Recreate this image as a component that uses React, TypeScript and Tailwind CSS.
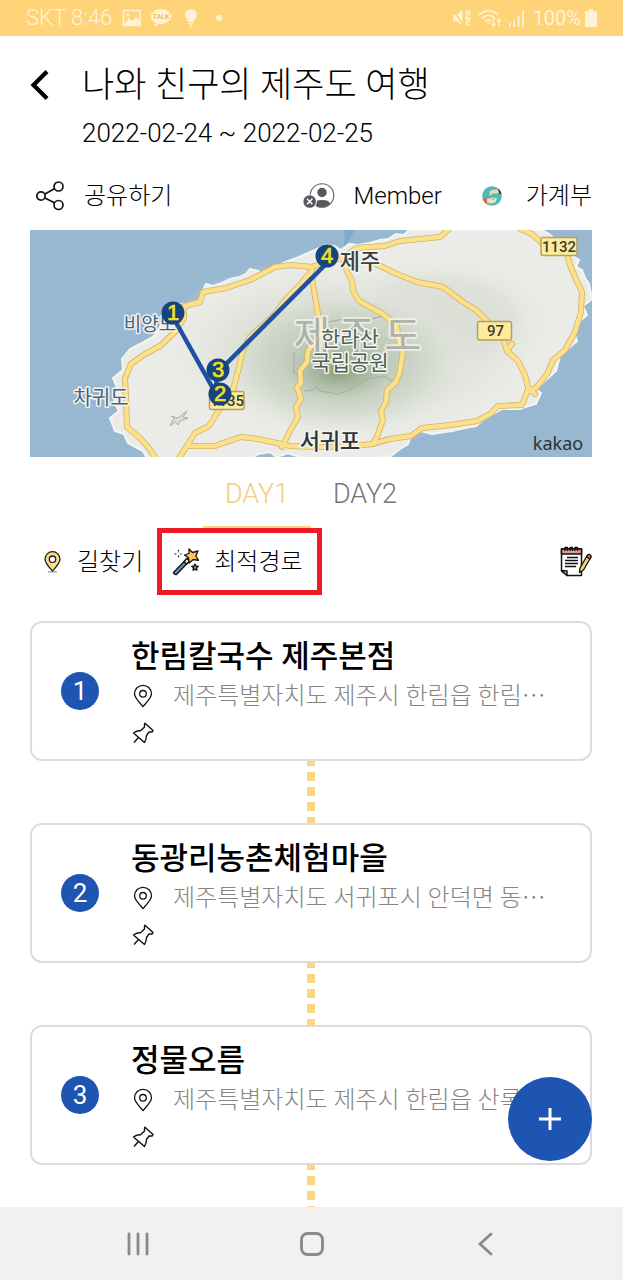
import React from "react";

const ROADS = [
  "M172 313L185 306L200 302L203 292L226 288L250 280L275 267L290 265L312 267L325 262L342 258L357 248L368 247L385 246L400 241L440 237L450 228",
  "M516 227L532 234L543 244L566 250L570 265L575 277L582 292L581 312L575 332L565 350L553 360L547 374L536 388L527 392L522 405L498 406L490 414L477 421L450 425L422 428L411 436L390 439L372 444L355 446L320 447L290 446L272 442L258 439L241 437L226 442L215 446L187 446",
  "M184 307L184 318L176 331L160 346L145 354L131 364L125 378L126 400L127 427L140 438L148 447L157 460",
  "M312 270L300 285L287 298L274 315L250 337L243 350L237 375L233 390L226 400L217 413L209 426L195 433L186 447L178 460",
  "M311 272L314 290L318 314L322 332L308 351L307 362L300 371L301 383L297 387L301 399L296 407L298 417L290 431L282 447",
  "M344 262L347 271L352 281L353 291L359 301L370 307L383 314L397 326L399 342L403 351L400 371L396 382L387 390L386 402L381 411L383 420L377 437L373 443",
  "M376 264L397 274L417 282L443 287L463 302L476 310L487 321L503 338L507 351L518 361L525 375L528 388L535 394",
  "M507 350L512 344",
];

const LAND =
  "M409 230L404 235L396 234L388 239L380 240L370 243L358 245L349 244L341 250L334 246L325 245L315 250L308 253L299 257L291 260L281 264L268 272L262 275L258 271L250 269L246 274L240 277L230 279L222 283L213 286L206 284L203 290L201 300L186 304L174 305L164 312L160 327L153 337L142 343L130 349L122 359L123 370L113 378L118 390L114 402L119 411L110 418L115 431L124 434L128 443L143 451L148 460L250 460L258 454L270 452L277 457L288 453L302 458L380 458L391 456L400 449L408 444L411 435L421 431L432 434L452 431L465 428L476 426L482 421L493 414L502 409L520 409L528 406L536 404L541 393L536 389L547 379L556 371L560 356L569 348L577 341L575 335L580 321L587 315L583 306L592 299L589 284L585 278L582 270L576 267L579 260L571 255L560 243L549 234L542 230Z";

type MapTextProps = {
  x: number;
  y: number;
  size: number;
  fill: string;
  weight?: number;
  halo?: number;
  children: React.ReactNode;
};

function MapText({ x, y, size, fill, weight = 500, halo = 3, children }: MapTextProps) {
  return (
    <text
      x={x}
      y={y}
      fontSize={size}
      fontWeight={weight}
      fill={fill}
      textAnchor="middle"
      stroke="#f4f5f1"
      strokeWidth={halo}
      strokeLinejoin="round"
      paintOrder="stroke"
    >
      {children}
    </text>
  );
}

const MARKERS = [
  { n: 1, x: 173, y: 313 },
  { n: 3, x: 218, y: 370 },
  { n: 2, x: 220, y: 394 },
  { n: 4, x: 327, y: 256 },
];

function RouteMap() {
  return (
    <svg viewBox="30 230 562 227" className="block h-auto w-full" role="img" aria-label="제주도">
      <defs>
        <radialGradient id="forest">
          <stop offset="0" stopColor="#a9bba3" />
          <stop offset="0.35" stopColor="#bfcab9" />
          <stop offset="0.7" stopColor="#d5dbcf" />
          <stop offset="1" stopColor="#e6e9e2" stopOpacity="0" />
        </radialGradient>
        <radialGradient id="summit">
          <stop offset="0" stopColor="#88a17f" />
          <stop offset="1" stopColor="#a7b9a0" stopOpacity="0" />
        </radialGradient>
        <radialGradient id="hills">
          <stop offset="0" stopColor="#d9ddd4" />
          <stop offset="0.6" stopColor="#dfe2da" />
          <stop offset="1" stopColor="#e9ebe5" stopOpacity="0" />
        </radialGradient>
      </defs>
      <rect x="30" y="230" width="562" height="227" fill="#98b8d1" />
      <path d="M345 230L355 230L348 242L344 249Z" fill="#7fa9cf" />
      <path d={LAND} fill="#ebece7" stroke="#f5f6f3" strokeWidth="2" />
      <ellipse cx="350" cy="350" rx="200" ry="95" fill="url(#hills)" />
      <ellipse cx="440" cy="320" rx="120" ry="65" fill="url(#hills)" />
      <ellipse cx="342" cy="360" rx="130" ry="76" fill="url(#forest)" />
      <ellipse cx="338" cy="372" rx="52" ry="28" fill="url(#summit)" />
      <path
        d="M294 352V373L303 376M304 391L314 390L316 386L320 391L338 394L352 389L366 379L384 376L396 384M328 322L350 318L370 319L385 316L400 323"
        fill="none"
        stroke="#a3aca3"
        strokeWidth="1"
      />
      <g fill="none" strokeLinejoin="round" strokeLinecap="round">
        {ROADS.map((d) => (
          <path key={d} d={d} stroke="#d2b468" strokeWidth="6" />
        ))}
        {ROADS.map((d) => (
          <path key={d} d={d} stroke="#fce08a" strokeWidth="4.400" />
        ))}
      </g>
      <path
        d="M170 426L174 418L171 416L178 418L187 411L183 417L188 418L180 421L178 425L175 422Z"
        fill="#dcdedb"
        stroke="#a9adab"
        strokeWidth="1"
      />
      <g fontFamily="'Noto Sans CJK KR', sans-serif" opacity="0.75">
        <MapText x={312} y={350} size={40} fill="#a3a7a3" halo={4} weight={400}>제</MapText>
        <MapText x={357} y={350} size={40} fill="#a3a7a3" halo={4} weight={400}>주</MapText>
        <MapText x={403} y={350} size={40} fill="#a3a7a3" halo={4} weight={400}>도</MapText>
      </g>
      <g fontFamily="'Noto Sans CJK KR', sans-serif">
        <MapText x={350} y={346} size={21} fill="#4d5f53" weight={400}>한라산</MapText>
        <MapText x={350} y={370} size={21} fill="#4d5f53" weight={400}>국립공원</MapText>
        <MapText x={150} y={331} size={19} fill="#46617f" weight={400}>비양도</MapText>
        <MapText x={101} y={405} size={20} fill="#46617f" weight={400}>차귀도</MapText>
        <MapText x={360} y={269} size={22} fill="#3c4043">제주</MapText>
        <MapText x={330} y={449} size={22} fill="#303438">서귀포</MapText>
      </g>
      <g fontFamily="Roboto, sans-serif" textAnchor="middle" fill="#3b3a33" fontWeight="500">
        <rect x="541" y="237.500" width="36" height="18" rx="2" fill="#fbeb9a" stroke="#b3a161" strokeWidth="1.500" />
        <text x="559" y="252" fontSize="15">1132</text>
        <rect x="477.500" y="321.500" width="34" height="18.500" rx="2" fill="#fbeb9a" stroke="#b3a161" strokeWidth="1.500" />
        <text x="495.500" y="336" fontSize="15">97</text>
        <rect x="209.500" y="391.500" width="34.500" height="18" rx="2" fill="#fbeb9a" stroke="#b3a161" strokeWidth="1.500" />
        <text x="227" y="406" fontSize="15">1135</text>
      </g>
      <text x="558" y="450" fontFamily="'Noto Sans', sans-serif" fontSize="18" fontWeight="400" textAnchor="middle" fill="#2c3136">
        kakao
      </text>
      <path d="M173 317L215 392L218 372L327 263" fill="none" stroke="#204fa3" strokeWidth="4.500" />
      <g fontFamily="'Liberation Sans', sans-serif" fontSize="22" fontWeight="400" textAnchor="middle">
        {MARKERS.map((m) => (
          <g key={m.n}>
            <circle cx={m.x} cy={m.y} r="11.500" fill="#174481" />
            <text x={m.x} y={m.y + 7} fill="#f5df1e" stroke="#f5df1e" strokeWidth="0.700">
              {m.n}
            </text>
          </g>
        ))}
      </g>
    </svg>
  );
}

function StatusBar() {
  return (
    <div className="flex h-9 items-center justify-between bg-[#ffd377] pr-[26px] pl-[26px] leading-9 font-normal text-[#fff3d6]">
      <div className="flex items-center text-[22px] font-light">
        <span>SKT 8:46</span>
        <svg viewBox="0 0 20 18" className="ml-[10px] h-[18px] w-5" fill="none" stroke="currentColor" strokeWidth="1.600">
          <rect x="1.500" y="1.500" width="16.500" height="15" />
          <path d="M2 15L7 9L10 12L14 8L18 12V16H2Z" fill="currentColor" stroke="none" />
          <circle cx="6" cy="6" r="1.700" fill="currentColor" stroke="none" />
        </svg>
        <svg viewBox="0 0 22 20" className="ml-2 h-5 w-[22px]" fill="currentColor">
          <path d="M11 1C5.400 1 1 4.300 1 8.500c0 2.700 1.800 5 4.500 6.300L4.700 19l4.500-3.100c.6.100 1.200.1 1.800.1 5.600 0 10-3.300 10-7.500S16.600 1 11 1Z" />
          <text x="11" y="11" fontSize="7" fontWeight="700" textAnchor="middle" fill="#f2bf5a">TALK</text>
        </svg>
        <svg viewBox="0 0 14 18" className="ml-3 h-[18px] w-[14px]" fill="currentColor">
          <path d="M7 0a6 6 0 0 0-6 6.100c0 2.300 1.300 3.600 2.600 4.800L4.400 13h5.200l.8-2.100C11.700 9.700 13 8.400 13 6.100A6 6 0 0 0 7 0ZM4.500 14h5v1.400h-5ZM5.300 16.200h3.400L7.800 18H6.200Z" />
        </svg>
        <span className="ml-[18px] size-[6px] rounded-full bg-[#fff3d6]" />
      </div>
      <div className="flex items-center text-xl">
        <svg viewBox="0 0 19 18" className="h-[18px] w-[19px]" fill="currentColor">
          <path d="M0 5.500h4l5.500-4.500v15.500l-5.500-4.500H0Z" />
          <path d="M0 .5L11 17" stroke="#ffd377" strokeWidth="1.800" />
          <path d="M13.500 1v3l3-2v3l-3 2v3l3-1.500v3l-3 1.500v3l3-1" fill="none" stroke="currentColor" strokeWidth="1.500" />
        </svg>
        <svg viewBox="0 0 24 18" className="ml-[6px] h-[18px] w-6" fill="none" stroke="currentColor" strokeWidth="1.800">
          <path d="M1 6C6.500.5 14.500.5 20 6M4 9.300c4-4 9-4 13 0M7 12.500c2.200-2.200 4-2.200 6 0" />
          <path d="M9 13.500l1.500 2 1.500-2Z" fill="currentColor" stroke="none" />
          <path d="M15.500 9.500v7M13.500 14.500l2 2.500 2-2.500M21 17v-6.500M19 12.500l2-2.500 2 2.500" strokeWidth="1.400" />
        </svg>
        <svg viewBox="0 0 17 18" className="ml-[6px] h-[18px] w-[17px]" stroke="currentColor" strokeWidth="1.700">
          <path d="M2 18v-4M6.300 18v-7M10.600 18V6.500M15 18V1" />
        </svg>
        <span className="ml-2">100%</span>
        <svg viewBox="0 0 12 18" className="ml-1 h-[18px] w-3" fill="currentColor">
          <path d="M4 0h4v2h3a1 1 0 0 1 1 1v14a1 1 0 0 1-1 1H1a1 1 0 0 1-1-1V3a1 1 0 0 1 1-1h3Z" />
        </svg>
      </div>
    </div>
  );
}

function ShareIcon() {
  return (
    <svg viewBox="0 0 28 30" className="h-[30px] w-7" fill="none" stroke="#111" strokeWidth="1.700">
      <circle cx="5" cy="15" r="4.200" />
      <circle cx="22.500" cy="5.500" r="4.500" />
      <circle cx="22.500" cy="24" r="4.500" />
      <path d="M9 13L18.300 7.800M9 17L18.300 21.800" />
    </svg>
  );
}

function MemberIcon() {
  return (
    <svg viewBox="0 0 32 26" className="h-[26px] w-8">
      <defs>
        <clipPath id="face">
          <circle cx="19" cy="12.500" r="11.500" />
        </clipPath>
      </defs>
      <circle cx="19" cy="12.500" r="11.800" fill="#fff" stroke="#606166" strokeWidth="1.100" />
      <g clipPath="url(#face)" fill="#58595e">
        <circle cx="19" cy="9.500" r="4.700" />
        <path d="M11 26v-5q0-4 8-4t8 4v5Z" />
      </g>
      <circle cx="7" cy="18.500" r="7" fill="#fff" />
      <circle cx="6.700" cy="18.500" r="6.300" fill="#58595e" />
      <path d="M4 15.800l5.400 5.400M9.400 15.800L4 21.200" stroke="#fff" strokeWidth="1.500" />
    </svg>
  );
}

function LedgerIcon() {
  return (
    <svg viewBox="0 0 20 20" className="size-5">
      <defs>
        <clipPath id="coin">
          <circle cx="10" cy="10" r="9.800" />
        </clipPath>
      </defs>
      <g clipPath="url(#coin)">
        <rect width="20" height="20" fill="#4fb9b8" />
        <path d="M15 3l5 1v4h-3Z" fill="#3c3b45" />
        <path d="M7 6l3-2 6-.5 1 3.500-4 1-2-1-2 2.500H7l1-2.500Z" fill="#efd9a5" />
        <path d="M0 12l4 0 2 4-3 3Z" fill="#e0654a" />
        <path d="M5 13l3-1 2 2 4 0v2l-5 1.500-4-1Z" fill="#f5dfba" />
        <path d="M9.500 11.500h2v2h-2ZM12.500 12h2v2h-2Z" fill="#f4efe0" />
      </g>
    </svg>
  );
}

function YellowPinIcon() {
  return (
    <svg viewBox="0 0 17 22" className="h-[22px] w-[17px]">
      <path d="M4 20.800h9" stroke="#aaa" strokeWidth="1.500" />
      <path d="M8.500 20C5 16 1 12 1 8.200a7.500 7.500 0 0 1 15 0C16 12 12 16 8.500 20Z" fill="#fddc84" stroke="#222" strokeWidth="1.300" />
      <circle cx="8.500" cy="8.200" r="3.200" fill="#fff" stroke="#222" strokeWidth="1.300" />
    </svg>
  );
}

function WandIcon() {
  return (
    <svg viewBox="0 0 28 28" className="size-7" stroke="#111" strokeLinejoin="round">
      <path d="M1.500 24.500L15 10.500L17.500 13L4.500 26.500Q2 27 1.500 24.500Z" fill="#6f8db8" strokeWidth="1.300" />
      <path d="M12 13.500L15 10.500L17.500 13L14.800 16Z" fill="#f4efe6" strokeWidth="1.200" />
      <path d="M17 1L20.500 4.500L26 3L23.800 8L26.500 12.300L21.300 11.500L17.200 15L16.500 9.800L12.500 7L17 5.500Z" fill="#fcc760" strokeWidth="1.300" />
      <path d="M23 16l1 2 2.300.3-1.700 1.600.4 2.300-2-1.100-2 1.100.4-2.300-1.700-1.600 2.300-.3Z" fill="#6f8db8" strokeWidth="1.300" />
      <path d="M6.500 2v2.500M6.500 7.500V10M2.500 6H5M8 6h2.500" strokeWidth="1.200" strokeDasharray="1.500 .8" />
    </svg>
  );
}

function NotepadIcon() {
  return (
    <svg viewBox="0 0 32 31" className="h-[31px] w-8" stroke="#111" strokeWidth="1.500" strokeLinejoin="round">
      <path d="M1.500 3h20v26.500H7L1.500 25Z" fill="#fff" />
      <path d="M1.500 3h20v5h-20Z" fill="#e39a84" />
      <path d="M1.500 24.500L7 25v4.500Z" fill="#f3d6a0" />
      <path d="M5 5V1.500h2.500V5M10 5V1.500h2.500V5M15 5V1.500h2.500V5" fill="none" strokeWidth="1.300" />
      <path d="M7 11.500h11M5 14.500h13M5 17.500h13M5 20.500h11" strokeWidth="1.400" />
      <path d="M19.500 26.500L20 22L27.500 9L31 11L23.500 24Z" fill="#fad07a" strokeWidth="1.300" />
      <path d="M26.500 11L28 8.500Q30 7.500 31.200 10.500L30 13Z" fill="#c96a5e" strokeWidth="1.200" />
    </svg>
  );
}

function PinOutlineIcon() {
  return (
    <svg viewBox="0 0 20 24" className="h-6 w-5" fill="none" stroke="#111" strokeWidth="1.300">
      <path d="M10 22.500C6 18 1.500 13.800 1.500 9.800a8.500 8.500 0 0 1 17 0C18.500 13.800 14 18 10 22.500Z" />
      <circle cx="10" cy="9.800" r="3.300" />
    </svg>
  );
}

function PushpinIcon() {
  return (
    <svg viewBox="0 0 22 22" className="size-[22px]" fill="none" stroke="#111" strokeWidth="1.400" strokeLinejoin="round">
      <path d="M13 1.200L21 8.500L20 10H17L14.500 13.500Q14.500 17 12.500 20.500L1.500 11Q5 8.500 8.500 8.800L12.500 5V2Z" />
      <path d="M6.500 15.500L2 20.500" />
    </svg>
  );
}

const STOPS = [
  { id: 1, name: "한림칼국수 제주본점", address: "제주특별자치도 제주시 한림읍 한림⋯" },
  { id: 2, name: "동광리농촌체험마을", address: "제주특별자치도 서귀포시 안덕면 동⋯" },
  { id: 3, name: "정물오름", address: "제주특별자치도 제주시 한림읍 산록⋯" },
];

function StopCard({ stop }: { stop: (typeof STOPS)[number] }) {
  return (
    <article className="flex h-[140px] items-center rounded-xl border-2 border-[#dcdcdc] bg-white pr-10 pl-[29px]">
      <span className="flex size-[38px] shrink-0 items-center justify-center rounded-full bg-[#1f55b2] text-[26px] leading-none font-normal text-white">
        {stop.id}
      </span>
      <div className="ml-8 min-w-0 flex-1 pt-[5px]">
        <h2 className="truncate text-[31px] leading-[40px] font-medium text-black">{stop.name}</h2>
        <p className="flex h-[38px] items-center gap-5 pl-[2px]">
          <PinOutlineIcon />
          <span className="truncate text-2xl leading-[38px] font-light text-[#858585]">{stop.address}</span>
        </p>
        <div className="flex h-9 items-center pl-px">
          <PushpinIcon />
        </div>
      </div>
    </article>
  );
}

export default function App() {
  return (
    <div className="flex min-h-screen flex-col bg-white font-['Roboto','Noto_Sans_CJK_KR',sans-serif] font-light text-black" lang="ko">
      <StatusBar />
      <main className="flex-1 pr-[31px] pl-[30px]">
        <header className="flex items-start pt-[26px]">
          <button type="button" aria-label="뒤로" className="flex h-[46px] w-[52px] items-center">
            <svg viewBox="0 0 20 30" className="h-[30px] w-5" fill="none" stroke="#000" strokeWidth="4.200">
              <path d="M17 1.500L3.500 15L17 28.500" />
            </svg>
          </button>
          <div>
            <h1 className="text-[35px] leading-[48px] font-light">나와 친구의 제주도 여행</h1>
            <p className="text-[26px] leading-[46px]">2022-02-24 ~ 2022-02-25</p>
          </div>
        </header>

        <div className="mt-1 flex h-[70px] items-center pt-0.5 text-2xl">
          <button type="button" className="flex items-center gap-5 pl-[6px]">
            <ShareIcon />
            <span>공유하기</span>
          </button>
          <button type="button" className="ml-auto flex items-center gap-[18px]">
            <MemberIcon />
            <span>Member</span>
          </button>
          <button type="button" className="ml-10 flex items-center gap-6">
            <LedgerIcon />
            <span>가계부</span>
          </button>
        </div>

        <RouteMap />

        <div role="tablist" className="flex h-[71px] justify-center text-[27px]">
          <button type="button" role="tab" aria-selected="true" className="w-[108px] border-b-2 border-[#fcd27c] pt-1.5 text-[#f5cd7c]">
            DAY1
          </button>
          <button type="button" role="tab" aria-selected="false" className="w-[108px] border-b-2 border-transparent pt-1.5 text-[#757575]">
            DAY2
          </button>
        </div>

        <div className="flex h-[67px] items-stretch text-2xl">
          <button type="button" className="flex items-center gap-4 pr-[14px] pl-[14px]">
            <YellowPinIcon />
            <span>길찾기</span>
          </button>
          <button type="button" className="flex items-center gap-[14px] border-[5px] border-[#ed1c24] pr-[14px] pl-[10px]">
            <WandIcon />
            <span>최적경로</span>
          </button>
          <button type="button" aria-label="메모" className="ml-auto">
            <NotepadIcon />
          </button>
        </div>

        <ol className="mt-[26px]">
          {STOPS.map((stop) => (
            <li key={stop.id} className="group">
              <StopCard stop={stop} />
              <div className="mx-auto h-[62px] w-2 bg-[repeating-linear-gradient(to_bottom,#fcd680_0px,#fcd680_5px,transparent_5px,transparent_11px,#fcd680_11px,#fcd680_15px)] group-last:h-[42px]" />
            </li>
          ))}
        </ol>
      </main>

      <button
        type="button"
        aria-label="추가"
        className="fixed right-[31px] bottom-[119px] flex size-[84px] items-center justify-center rounded-full bg-[#1f55b2]"
      >
        <svg viewBox="0 0 22 22" className="size-[22px]" stroke="#fff" strokeWidth="3">
          <path d="M11 0V22M0 11H22" />
        </svg>
      </button>

      <nav className="sticky bottom-0 flex h-[73px] items-center justify-center gap-[149px] bg-[#f1f1f1] text-[#8a8a8a]">
        <button type="button" aria-label="최근 앱">
          <svg viewBox="0 0 24 24" className="size-6" stroke="currentColor" strokeWidth="2.800" strokeLinecap="round">
            <path d="M3 2V22M12 2V22M21 2V22" />
          </svg>
        </button>
        <button type="button" aria-label="홈">
          <svg viewBox="0 0 26 26" className="size-[26px]" fill="none" stroke="currentColor" strokeWidth="2.800">
            <rect x="2.500" y="2.500" width="21" height="21" rx="6" />
          </svg>
        </button>
        <button type="button" aria-label="뒤로 가기">
          <svg viewBox="0 0 24 24" className="size-6" fill="none" stroke="currentColor" strokeWidth="2.800" strokeLinecap="round">
            <path d="M17 2L6 12L17 22" />
          </svg>
        </button>
      </nav>
    </div>
  );
}
